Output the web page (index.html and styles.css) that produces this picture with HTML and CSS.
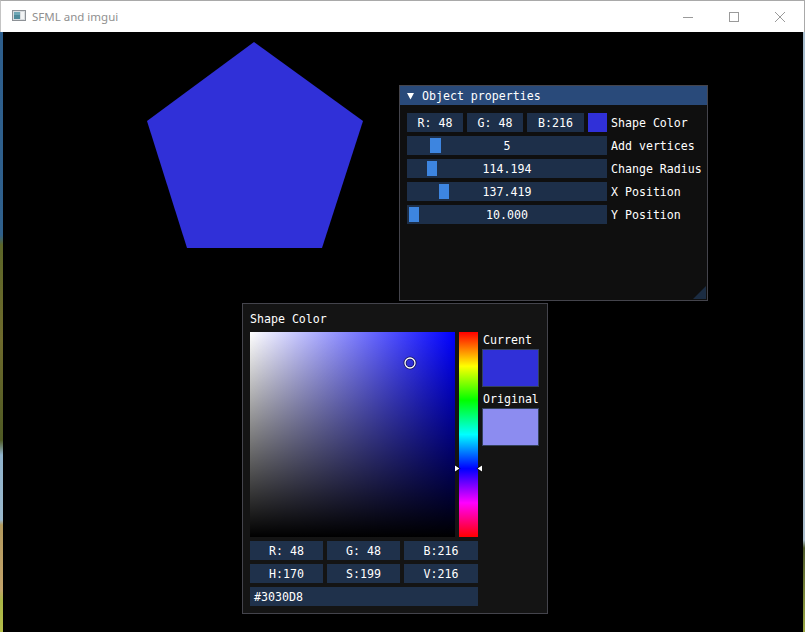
FILE: index.html
```html
<!DOCTYPE html>
<html>
<head>
<meta charset="utf-8">
<title>SFML and imgui</title>
<link rel="stylesheet" href="styles.css">
</head>
<body>
<div class="titlebar">
  <svg class="app-icon" width="14" height="11" viewBox="0 0 14 11">
    <rect x="0.5" y="0.5" width="13" height="10" fill="#d9dde0" stroke="#8d9196"/>
    <rect x="2" y="2" width="6" height="7" fill="#4f8a9a"/>
    <rect x="2" y="2" width="6" height="3" fill="#6fa7b5"/>
    <rect x="9" y="2" width="3" height="7" fill="#f2f4f5"/>
  </svg>
  <span class="win-title">SFML and imgui</span>
  <div class="win-controls">
    <div class="wbtn"><svg width="10" height="10" viewBox="0 0 10 10"><path d="M0 5.5H10" stroke="#9a9a9a" stroke-width="1"/></svg></div>
    <div class="wbtn"><svg width="10" height="10" viewBox="0 0 10 10"><rect x="0.5" y="0.5" width="9" height="9" fill="none" stroke="#9a9a9a"/></svg></div>
    <div class="wbtn"><svg width="10" height="10" viewBox="0 0 10 10"><path d="M0 0L10 10M10 0L0 10" stroke="#9a9a9a" stroke-width="1"/></svg></div>
  </div>
</div>
<div class="client">
  <svg class="shape" width="800" height="600" viewBox="0 0 800 600">
    <polygon points="251,10 360,89 319,216 184,216 144,89" fill="#3030d8"/>
  </svg>

  <div class="imwin props">
    <div class="imtitle">
      <svg class="tri" width="8" height="8" viewBox="0 0 8 8"><polygon points="0,1 7,1 3.5,7.5" fill="#fff"/></svg>
      <span class="imtitle-text">Object properties</span>
    </div>
    <div class="imbody">
      <div class="row">
        <div class="frame w56">R: 48</div>
        <div class="frame w56">G: 48</div>
        <div class="frame w57">B:216</div>
        <div class="swatch-sm"></div>
        <span class="label">Shape Color</span>
      </div>
      <div class="row">
        <div class="frame slider"><span class="grab wide" style="left:23px"></span><span class="val">5</span></div>
        <span class="label">Add vertices</span>
      </div>
      <div class="row">
        <div class="frame slider"><span class="grab" style="left:20px"></span><span class="val">114.194</span></div>
        <span class="label">Change Radius</span>
      </div>
      <div class="row">
        <div class="frame slider"><span class="grab" style="left:32px"></span><span class="val">137.419</span></div>
        <span class="label">X Position</span>
      </div>
      <div class="row">
        <div class="frame slider"><span class="grab" style="left:2px"></span><span class="val">10.000</span></div>
        <span class="label">Y Position</span>
      </div>
    </div>
    <div class="grip"></div>
  </div>

  <div class="imwin popup">
    <div class="popup-title">Shape Color</div>
    <div class="picker">
      <div class="sv">
        <svg class="sv-marker" width="14" height="14" viewBox="0 0 14 14">
          <circle cx="7" cy="7" r="5" fill="none" stroke="#000" stroke-width="3" opacity="0.6"/>
          <circle cx="7" cy="7" r="5" fill="none" stroke="#fff" stroke-width="1.3"/>
        </svg>
      </div>
      <div class="hue">
        <svg class="hue-arrows" width="27" height="9" viewBox="0 0 27 9">
          <polygon points="0,0.5 5.5,4.5 0,8.5" fill="#000"/>
          <polygon points="0,1.5 4.5,4.5 0,7.5" fill="#fff"/>
          <polygon points="27,0.5 21.5,4.5 27,8.5" fill="#000"/>
          <polygon points="27,1.5 22.5,4.5 27,7.5" fill="#fff"/>
        </svg>
      </div>
      <div class="side">
        <div class="side-label">Current</div>
        <div class="swatch current"></div>
        <div class="side-label">Original</div>
        <div class="swatch original"></div>
      </div>
    </div>
    <div class="inputs">
      <div class="row">
        <div class="frame w73">R: 48</div>
        <div class="frame w73">G: 48</div>
        <div class="frame w74">B:216</div>
      </div>
      <div class="row">
        <div class="frame w73">H:170</div>
        <div class="frame w73">S:199</div>
        <div class="frame w74">V:216</div>
      </div>
      <div class="row">
        <div class="frame hex">#3030D8</div>
      </div>
    </div>
  </div>
</div>
</body>
</html>
```

FILE: styles.css
```css
html, body {
  margin: 0;
  padding: 0;
}

body {
  width: 805px;
  height: 632px;
  overflow: hidden;
  background:
    linear-gradient(to bottom, #d4d6d8 0px, #d4d6d8 32px, #2d5e8c 32px, #2f608c 235px, #5c6628 245px, #6e6a2c 340px, #4f5a24 440px, #8fb2cc 455px, #9ab8cc 520px, #b39a5e 525px, #c2a36a 590px, #a9b545 600px, #b4bd4a 632px) left top / 3px 100% no-repeat,
    linear-gradient(to bottom, #d4d6d8 0px, #d4d6d8 32px, #a6bccd 32px, #a9bdcc 540px, #4e5a2c 548px, #7d8a3a 600px, #9aa844 632px) right top / 2px 100% no-repeat,
    #000;
  font-family: "DejaVu Sans Mono", "Liberation Mono", monospace;
}

/* ---------- OS title bar ---------- */
.titlebar {
  box-sizing: border-box;
  height: 32px;
  width: 805px;
  background: #ffffff;
  border-top: 1px solid #a9a9a9;
  border-left: 1px solid #c4c4c4;
  border-right: 1px solid #a9a9a9;
  display: flex;
  align-items: center;
  padding-left: 11px;
}

.app-icon {
  display: block;
  margin-top: -2px;
}

.win-title {
  margin-left: 6px;
  font-family: "Noto Sans", "Open Sans", sans-serif;
  font-size: 11.5px;
  color: #909090;
  margin-top: -1px;
}

.win-controls {
  margin-left: auto;
  display: flex;
  height: 31px;
  margin-right: 1px;
}

.wbtn {
  width: 46px;
  height: 31px;
  display: flex;
  align-items: center;
  justify-content: center;
}

.wbtn svg {
  display: block;
}

/* ---------- SFML client area ---------- */
.client {
  position: relative;
  width: 800px;
  height: 600px;
  margin-left: 3px;
  background: #000;
  color: #fff;
  font-size: 11.6px;
  line-height: 13px;
}

.shape {
  position: absolute;
  left: 0;
  top: 0;
  display: block;
}

/* ---------- imgui windows ---------- */
.imwin {
  position: absolute;
  box-sizing: border-box;
  border: 1px solid #44444c;
}

.props {
  left: 396px;
  top: 53px;
  width: 309px;
  height: 216px;
  background: #0f0f0f;
}

.imtitle {
  height: 19px;
  background: #294a7a;
  display: flex;
  align-items: center;
  padding-left: 7px;
  gap: 7px;
  white-space: pre;
}

.imtitle-text {
  padding-top: 2px;
}

.tri {
  display: block;
}

.imbody {
  padding: 8px 7px 7px;
  display: flex;
  flex-direction: column;
  gap: 4px;
}

.row {
  display: flex;
  gap: 4px;
  height: 19px;
  align-items: center;
}

.frame {
  position: relative;
  box-sizing: border-box;
  flex-shrink: 0;
  height: 19px;
  padding-top: 2px;
  background: #1d2f49;
  display: flex;
  align-items: center;
  justify-content: center;
  white-space: pre;
}

.w56 { width: 56px; }
.w57 { width: 57px; }
.w73 { width: 73px; }
.w74 { width: 74px; }

.slider {
  width: 200px;
}

.grab {
  position: absolute;
  top: 2px;
  width: 10px;
  height: 15px;
  background: #3d85e0;
}

.grab.wide {
  width: 11px;
}

.val {
  position: relative;
}

.swatch-sm {
  flex-shrink: 0;
  width: 19px;
  height: 19px;
  background: #3030d8;
}

.label {
  flex-shrink: 0;
  white-space: pre;
  padding-top: 2px;
}

.grip {
  position: absolute;
  right: 1px;
  bottom: 1px;
  width: 13px;
  height: 13px;
  background: #1b2c42;
  clip-path: polygon(100% 0, 100% 100%, 0 100%);
}

/* ---------- color picker popup ---------- */
.popup {
  left: 239px;
  top: 271px;
  width: 306px;
  height: 311px;
  background: #141414;
  padding: 7px;
}

.popup-title {
  box-sizing: border-box;
  height: 13px;
  padding-top: 1px;
  margin-top: 1px;
  margin-bottom: 7px;
  white-space: pre;
}

.picker {
  display: flex;
  height: 205px;
}

.sv {
  position: relative;
  width: 205px;
  height: 205px;
  background:
    linear-gradient(to bottom, rgba(0,0,0,0), #000),
    linear-gradient(to right, #fff, #0000ff);
}

.sv-marker {
  position: absolute;
  left: 153px;
  top: 24px;
  display: block;
}

.hue {
  position: relative;
  width: 19px;
  height: 205px;
  margin-left: 4px;
  background: linear-gradient(to bottom, #ff0000 0%, #ffff00 16.667%, #00ff00 33.333%, #00ffff 50%, #0000ff 66.667%, #ff00ff 83.333%, #ff0000 100%);
}

.hue-arrows {
  position: absolute;
  left: -4px;
  top: 132px;
  display: block;
}

.side {
  margin-left: 4px;
  width: 57px;
  display: flex;
  flex-direction: column;
  gap: 4px;
}

.side-label {
  box-sizing: border-box;
  height: 13px;
  padding-top: 2px;
  white-space: pre;
  padding-left: 1px;
}

.swatch {
  box-sizing: border-box;
  height: 38px;
  border: 1px solid #34415c;
}

.swatch.current {
  background: #3030d8;
}

.swatch.original {
  background: #8c8cf0;
}

.inputs {
  margin-top: 4px;
  display: flex;
  flex-direction: column;
  gap: 4px;
}

.inputs .frame {
  background: #1f314b;
}

.hex {
  width: 228px;
  justify-content: flex-start;
  padding-left: 4px;
}
```
